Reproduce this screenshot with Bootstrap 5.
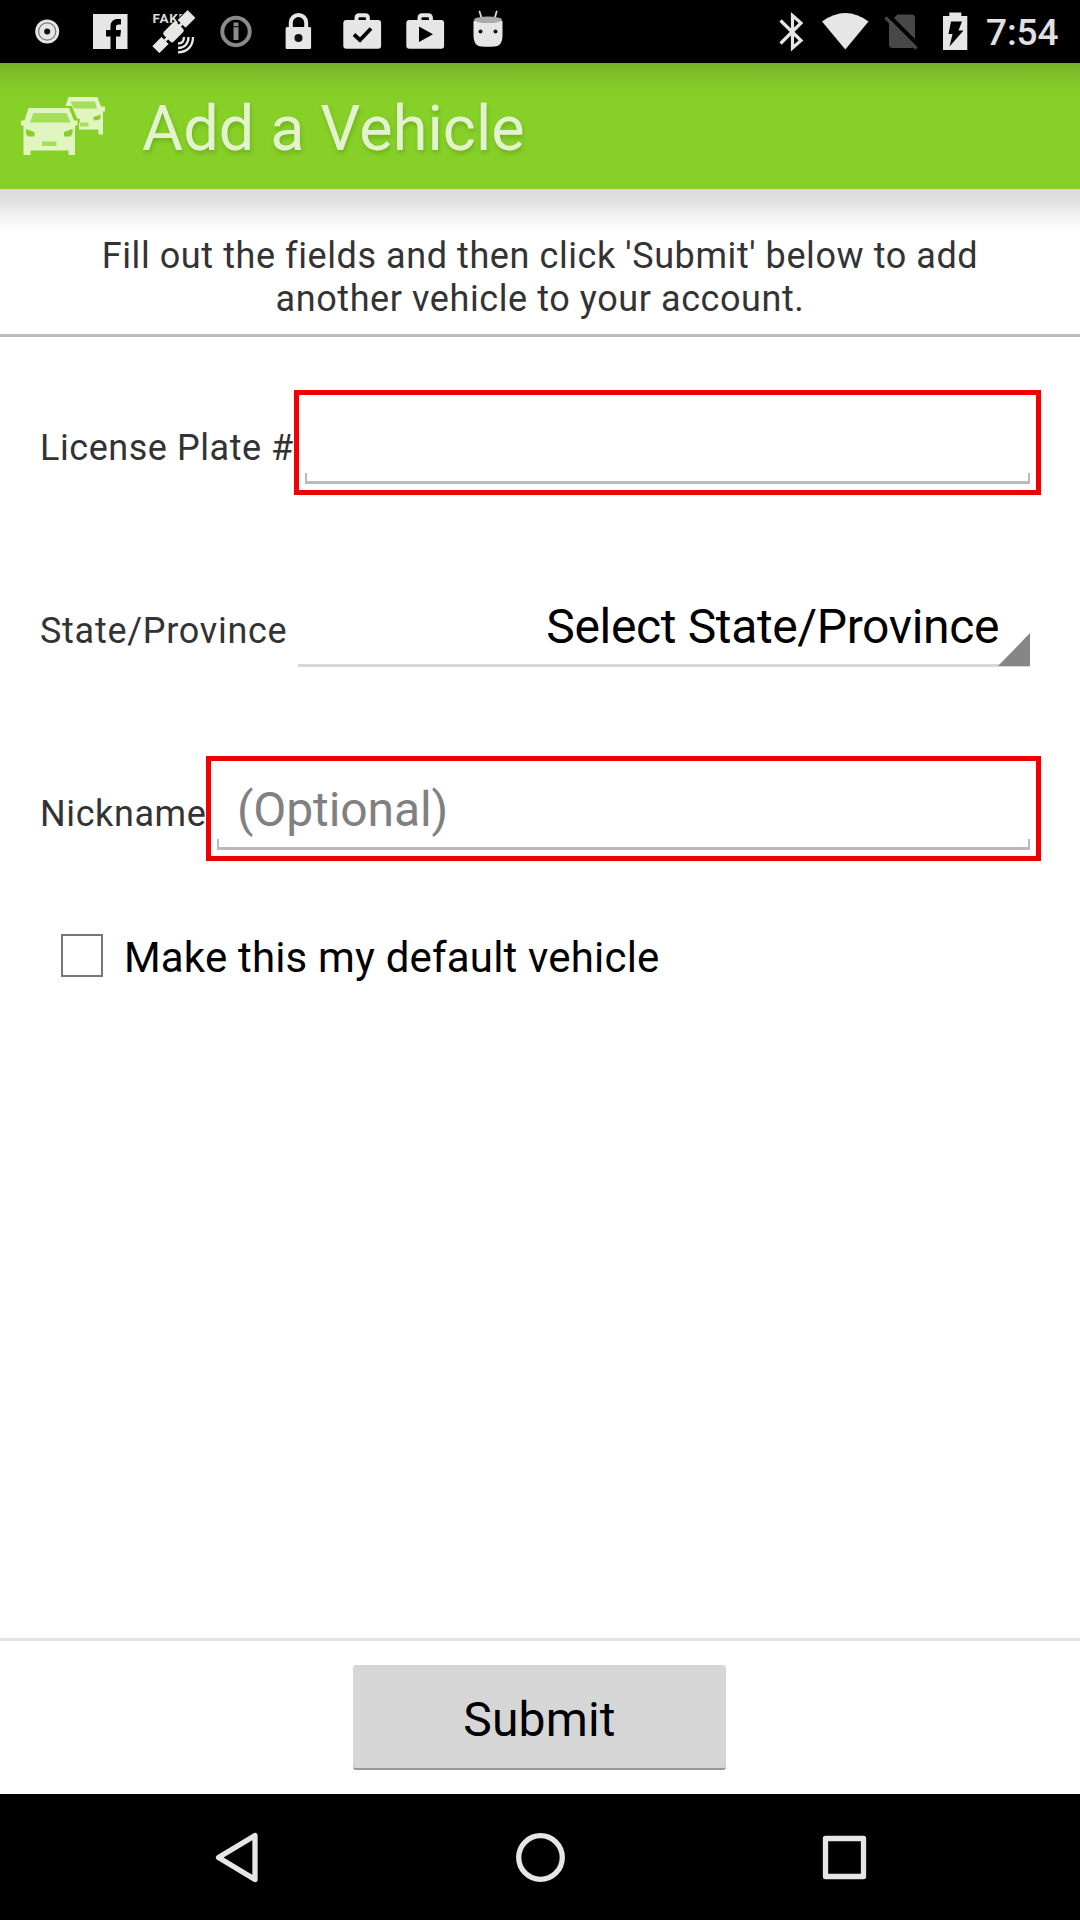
<!DOCTYPE html>
<html lang="en">
<head>
<meta charset="utf-8">
<meta name="viewport" content="width=device-width, initial-scale=1">
<title>Add a Vehicle</title>
<link href="https://cdn.jsdelivr.net/npm/bootstrap@5.3.0/dist/css/bootstrap.min.css" rel="stylesheet">
<style>
  body { font-family: Roboto, "Noto Sans", sans-serif; color: #333; background: #fff; }
  .screen { width: 1080px; height: 1920px; overflow: hidden; }
  svg { display: block; flex: none; }
  .status-bar { height: 63px; background: #000; padding-left: 16px; }
  .clock { font-size: 37px; font-weight: 500; line-height: 63px; color: #e0e0e0; width: 94px; padding-top: 1px; letter-spacing: -.1px; }
  .app-bar { height: 126px; background: linear-gradient(#76b029 0, #7dbd28 9px, #84ca28 24px, #87d028 40px); padding-left: 20px; }
  .app-title { font-size: 63px; line-height: 74px; color: #e3f3cd; margin: 6px 0 0 34px; font-weight: 400; text-shadow: 1px 3px 4px rgba(70,120,0,.35); letter-spacing: .1px; }
  .intro { height: 148px; padding-top: 46px; font-size: 36px; line-height: 43px; border-bottom: 3px solid #bcbcbc;
           background: linear-gradient(#dadada 0, #e2e2e2 14px, #f4f4f4 28px, #fff 44px); letter-spacing: .58px; }
  .fields { padding: 53px 39px 0 40px; gap: 78px; }
  .field-row { height: 105px; }
  .field-label { font-size: 36px; line-height: 42px; padding-top: 10px; white-space: nowrap; flex: none; letter-spacing: .6px; }
  .w-plate { width: 254px; letter-spacing: .55px; } .w-state { width: 258px; letter-spacing: .72px; } .w-nick { width: 166px; }
  .edit-box { border: 5px solid #f00000; padding: 0 6px 6px; }
  .edit-line { height: 11px; border: solid #b9b9c0; border-width: 0 2px 3px; }
  .edit-text { font-size: 48px; line-height: 56px; color: #808080; padding: 0 0 1px 20px; letter-spacing: -.1px; }
  .spinner-box { margin-right: 11px; height: 94px; }
  .spinner-text { font-size: 48px; line-height: 56px; color: #000; padding: 0 31px 9px 0; letter-spacing: -.36px; }
  .spinner-line { height: 3px; background: #d8d8d8; }
  .spinner-tri { right: 0; bottom: 1px; }
  .default-row { margin: 73px 0 0 61px; height: 43px; }
  .tick { width: 42px; height: 43px; border: 2px solid #777; }
  .tick-label { font-size: 42px; line-height: 49px; color: #000; margin-left: 21px; padding-top: 3px; letter-spacing: .18px; }
  .submit-area { height: 156px; border-top: 3px solid #e3e3e3; padding-top: 24px; }
  .submit-btn { width: 373px; height: 105px; background: #d6d6d6; border: 0; border-bottom: 2px solid #999; border-radius: 3px;
                font-size: 48px; color: #000; margin-right: 1px; padding: 6px 0 0; letter-spacing: .15px; }
  .nav-area { height: 126px; background: #000; }
</style>
</head>
<body>
<div class="screen d-flex flex-column">
  <header class="status-bar d-flex">
    <svg width="63" height="63" viewBox="16 0 63 63"><circle cx="47.2" cy="31.5" r="12" fill="#e6e6e6"/><circle cx="47.2" cy="31.5" r="8.6" fill="none" stroke="#777" stroke-width="1.2"/><circle cx="47.2" cy="31.5" r="3" fill="#111"/></svg>
    <svg width="63" height="63" viewBox="79 0 63 63"><path fill="#e6e6e6" d="M93 14h34.500v35H93z"/><path fill="#000" d="M110.500 49V36.500H106V30h4.500v-3.500c0-5 3-7.500 7.500-7.500h3v5.500h-2.500c-2 0-2.500 1-2.500 2.500v3h5l-.7 6.500H116V49z"/></svg>
    <svg width="63" height="63" viewBox="142 0 63 63"><text x="152.500" y="23" font-size="13.500" font-weight="700" font-family="Roboto, sans-serif" fill="#dcdcdc" letter-spacing=".7">FAKE</text><g transform="translate(173.500 32) rotate(-45)" fill="#e6e6e6"><path stroke="#000" stroke-width="1" d="M-25.500-5.500h14v11h-14zM11-6h15V6H11z"/><path d="M-12-1.500h24v3h-24z"/><rect x="-9" y="-7" width="18" height="14" rx="2.500"/></g><path d="M178 43.500c4 0 6-2.500 6-6.500M178 48c6.500 0 10.500-4.500 10.500-11M178 52.300c9 0 15-6 15-15.300" fill="none" stroke="#e6e6e6" stroke-width="2.300"/></svg>
    <svg width="63" height="63" viewBox="205 0 63 63"><circle cx="236" cy="31.500" r="13.700" fill="none" stroke="#8a8a8a" stroke-width="4"/><path fill="#8a8a8a" d="M233.500 22.500h5v3.800h-5zM233.500 27.200h5V40h-5z"/></svg>
    <svg width="63" height="63" viewBox="268 0 63 63"><path fill="none" stroke="#e6e6e6" stroke-width="4" d="M290.800 29v-6.300a7.700 7.700 0 0 1 15.400 0V29"/><rect x="285.600" y="27" width="25.500" height="22" rx="1.500" fill="#e6e6e6"/><circle cx="298.500" cy="38" r="4" fill="#111"/></svg>
    <svg width="63" height="63" viewBox="331 0 63 63"><path fill="none" stroke="#e6e6e6" stroke-width="4" d="M356.500 22v-4q0-2.800 2.800-2.800h5.800q2.800 0 2.800 2.800v4"/><rect x="343.300" y="20" width="37.800" height="28.800" rx="3" fill="#e6e6e6"/><path fill="none" stroke="#000" stroke-width="3.800" d="M354 34.500l6 5.500 11-11.500"/></svg>
    <svg width="63" height="63" viewBox="394 0 63 63"><path fill="none" stroke="#e6e6e6" stroke-width="4" d="M419.500 22v-4q0-2.800 2.800-2.800h5.800q2.800 0 2.800 2.800v4"/><rect x="406.300" y="20" width="37.800" height="28.800" rx="3" fill="#e6e6e6"/><path d="M419 26.500l14 7.700-14 7.700z"/></svg>
    <svg width="63" height="63" viewBox="457 0 63 63"><path fill="none" stroke="#d8d8d8" stroke-width="1.800" stroke-linecap="round" d="M481.500 18l-2-6.500M494.700 18l2-6.500"/><path fill="#e6e6e6" d="M473.500 21h29v15q0 10-8 10.500-6.500.5-13 0-8-.5-8-10.500z"/><ellipse cx="488" cy="19.800" rx="14" ry="3.300" fill="#aaa"/><circle cx="480.500" cy="31.500" r="2" fill="#111"/><circle cx="495.500" cy="31.500" r="2" fill="#111"/></svg>
    <div class="d-flex ms-auto">
      <svg width="54" height="63" viewBox="764 0 54 63"><path fill="none" stroke="#e6e6e6" stroke-width="3.200" d="M780.500 20.500L801 40.500l-8.500 7.500V15.500l8.500 7.500-20.500 20.500"/></svg>
      <svg width="57" height="63" viewBox="818 0 57 63"><path fill="#e6e6e6" d="M822 21.500Q845.500 4.500 868.500 21.500L845.300 49.500z"/></svg>
      <svg width="54" height="63" viewBox="875 0 54 63"><path fill="#484848" d="M897.500 14.500h14q3.500 0 3.500 3.500v26q0 4-3.500 4h-19q-3.500 0-3.500-4V23z"/><path stroke="#000" stroke-width="4.500" d="M886.500 13.500l32 32"/><path stroke="#484848" stroke-width="3.200" d="M885.500 17.500l31 31"/></svg>
      <svg width="57" height="63" viewBox="929 0 57 63"><path fill="#e6e6e6" d="M949.300 12.500h12V16h6v34H943V16h6.300z"/><path d="M951 21.500h11l-3.500 9h5l-14 16 3-12.500h-4z"/></svg>
      <div class="clock">7:54</div>
    </div>
  </header>

  <div class="app-bar d-flex align-items-center">
    <svg width="88" height="126" viewBox="20 63 88 126">
      <path fill="#e0f5c0" d="M68.500 97h29l3.500 9.500h4v5h-2V134.500h-4.500v-5H79V119h-2l-5-13h-6.500z"/>
      <path fill="#a5de5a" d="M70.500 101.500h24.500l2 7H74zM80 122.500h8.500v4H80z"/><path fill="#87d028" d="M93.500 117l7-2.500v4l-2.500 1.800h-4.500z"/>
      <path fill="none" stroke="#87d028" stroke-width="2.500" d="M70.500 108l6 12h2v3"/>
      <path fill="#e0f5c0" d="M28.500 108H69l5 12.500h3.500v5H75V155h-6.500v-4.500H30.500v4.500h-7v-29.500H21v-5h3.500z"/>
      <path fill="#a5de5a" d="M33.500 113h33l4 9.500H30z"/><path fill="#87d028" d="M26 129l8.500 3v4.500H28l-2-3zM72.500 129l-8.500 3v4.500h6.500l2-3z"/><path fill="#a5de5a" d="M42 141.500h14.500v4.500H42z"/>
    </svg>
    <h1 class="app-title">Add a Vehicle</h1>
  </div>

  <main class="d-flex flex-column flex-grow-1">
    <div class="intro text-center">Fill out the fields and then click 'Submit' below to add<br>another vehicle to your account.</div>
    <div class="fields d-flex flex-column">
      <div class="field-row d-flex align-items-center">
        <label class="field-label w-plate">License Plate #</label>
        <div class="edit-box flex-grow-1 h-100 d-flex flex-column justify-content-end"><div class="edit-line"></div></div>
      </div>
      <div class="field-row d-flex align-items-center">
        <label class="field-label w-state">State/Province</label>
        <div class="spinner-box position-relative flex-grow-1 align-self-start d-flex flex-column justify-content-end">
          <div class="spinner-text text-end">Select State/Province</div>
          <div class="spinner-line"></div>
          <svg class="spinner-tri position-absolute" width="32" height="33" viewBox="0 0 32 33"><path fill="#868686" d="M32 0v33H0z"/></svg>
        </div>
      </div>
      <div class="field-row d-flex align-items-center">
        <label class="field-label w-nick">Nickname</label>
        <div class="edit-box flex-grow-1 h-100 d-flex flex-column justify-content-end"><div class="edit-text">(Optional)</div><div class="edit-line"></div></div>
      </div>
    </div>
    <div class="default-row d-flex align-items-center">
      <span class="tick"></span><span class="tick-label">Make this my default vehicle</span>
    </div>
    <div class="submit-area mt-auto text-center"><button class="submit-btn" type="button">Submit</button></div>
  </main>

  <nav class="nav-area">
    <svg width="1080" height="126" viewBox="0 1794 1080 126" fill="none" stroke="#e6e6e6" stroke-width="5.300" stroke-linejoin="round"><path d="M255 1835.500v44l-36.500-22z"/><circle cx="540.500" cy="1857.500" r="21.800"/><rect x="825.500" y="1838.500" width="38" height="38"/></svg>
  </nav>
</div>
<script src="https://cdn.jsdelivr.net/npm/bootstrap@5.3.0/dist/js/bootstrap.bundle.min.js"></script>
</body>
</html>
